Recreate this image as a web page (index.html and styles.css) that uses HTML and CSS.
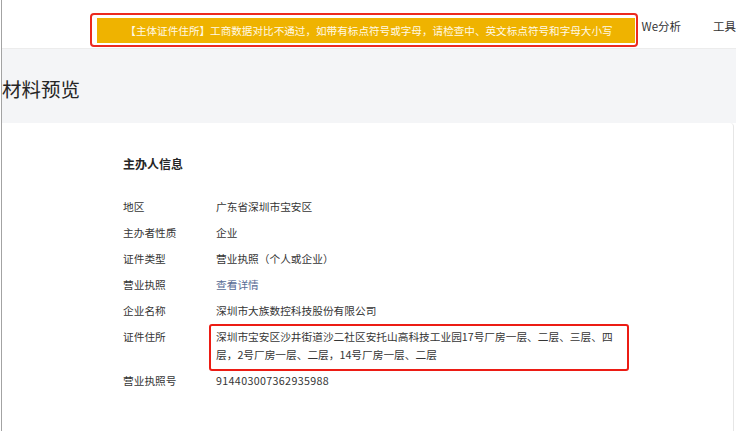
FILE: index.html
```html
<!DOCTYPE html>
<html lang="zh-CN">
<head>
<meta charset="utf-8">
<title>材料预览</title>
<link rel="stylesheet" href="styles.css">
</head>
<body>
<div class="app">
  <header class="topbar">
    <div class="toast-mark">
      <div class="toast">【主体证件住所】工商数据对比不通过，如带有标点符号或字母，请检查中、英文标点符号和字母大小写</div>
    </div>
    <nav class="nav">
      <span class="nav-item">We分析</span>
      <span class="nav-item">工具</span>
    </nav>
  </header>
  <section class="title-band">
    <h1 class="page-title">材料预览</h1>
  </section>
  <main class="card">
    <h2 class="section-title">主办人信息</h2>
    <dl class="info">
      <dt>地区</dt><dd>广东省深圳市宝安区</dd>
      <dt>主办者性质</dt><dd>企业</dd>
      <dt>证件类型</dt><dd>营业执照（个人或企业）</dd>
      <dt>营业执照</dt><dd><a class="link">查看详情</a></dd>
      <dt>企业名称</dt><dd>深圳市大族数控科技股份有限公司</dd>
      <dt>证件住所</dt><dd class="marked">深圳市宝安区沙井街道沙二社区安托山高科技工业园17号厂房一层、二层、三层、四层，2号厂房一层、二层，14号厂房一层、二层</dd>
      <dt>营业执照号</dt><dd class="num">914403007362935988</dd>
    </dl>
  </main>
</div>
</body>
</html>
```
FILE: styles.css
```css
* { box-sizing: border-box; }
html, body { margin: 0; padding: 0; }
body {
  width: 736px;
  height: 431px;
  overflow: hidden;
  background: #fff;
  font-family: "Noto Sans CJK SC", "Noto Sans", sans-serif;
  color: #353535;
}
.app {
  position: relative;
  margin-left: 1px;
  height: 431px;
  border-left: 1px solid #a3a3a3;
  display: flex;
  flex-direction: column;
  overflow: hidden;
}
.topbar {
  position: relative;
  height: 49px;
  flex: none;
  display: flex;
  justify-content: flex-end;
  align-items: center;
  border-bottom: 1px solid #ececec;
}
.nav {
  display: flex;
  gap: 32px;
  margin-right: 0;
  padding-top: 4px;
}
.nav-item {
  font-size: 11.5px;
  line-height: 16px;
  color: #333;
  white-space: nowrap;
}
.toast-mark {
  position: absolute;
  left: 88px;
  top: 13px;
  width: 548px;
  height: 34px;
  border: 2px solid #ec2a1e;
  border-radius: 4px;
  padding: 3px 1px 2px 5px;
}
.toast {
  height: 25px;
  background: #efb300;
  color: #fff9e6;
  font-size: 10.6px;
  line-height: 25px;
  text-align: center;
  padding-left: 6px;
  white-space: nowrap;
  overflow: hidden;
}
.title-band {
  flex: none;
  height: 74px;
  background: #f4f5f7;
  padding-top: 26px;
}
.page-title {
  margin: 0;
  font-size: 19.5px;
  line-height: 28px;
  font-weight: 400;
  color: #262626;
}
.card {
  flex: 1;
  background: #fff;
  margin-right: 2px;
  border-right: 1px solid #e6e6e6;
  border-top-right-radius: 4px;
  padding: 32px 0 0 121px;
}
.section-title {
  margin: 0;
  font-size: 12px;
  line-height: 18px;
  font-weight: 600;
  color: #262626;
}
.info {
  margin: 25px 0 0;
  display: grid;
  grid-template-columns: 93px 400px;
  row-gap: 8px;
  font-size: 10.7px;
  line-height: 18px;
}
.info dt, .info dd { margin: 0; }
.num { letter-spacing: 0.35px; }
.link { color: #576b95; }
.marked { position: relative; }
.marked::after {
  content: "";
  position: absolute;
  left: -7px;
  top: -4px;
  width: 416px;
  height: 43px;
  border: 2.5px solid #ec1c14;
  border-radius: 3px;
}
```
